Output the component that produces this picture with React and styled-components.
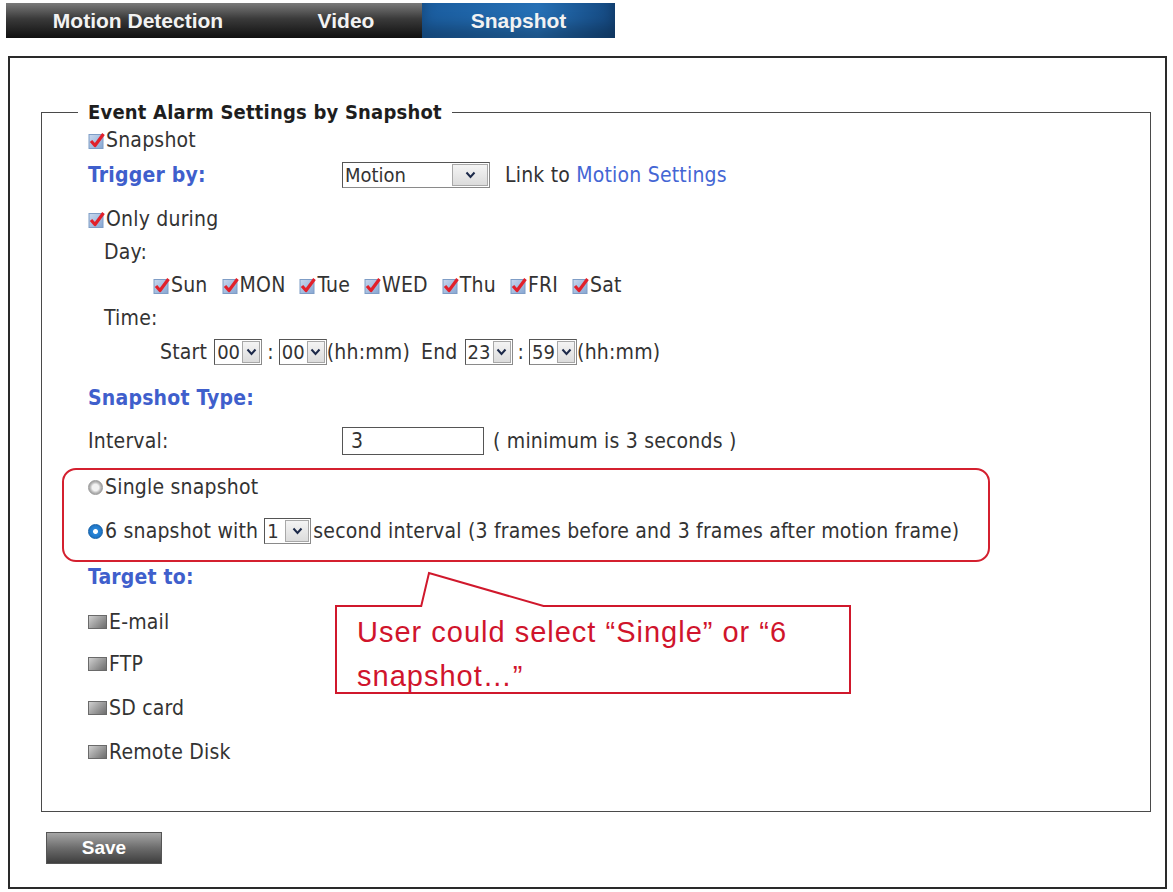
import React from "react";
import styled, { createGlobalStyle } from "styled-components";

const days = ["Sun", "MON", "Tue", "WED", "Thu", "FRI", "Sat"];
const targets = [
    { label: "E-mail", mt: 15 },
    { label: "FTP", mt: 12 },
    { label: "SD card", mt: 14 },
    { label: "Remote Disk", mt: 14 },
];

function CheckIcon() {
    return (
        <svg width="17" height="17" viewBox="0 0 17 17">
            <defs>
                <linearGradient id="cb" x1="0" y1="0" x2="1" y2="1">
                    <stop offset="0" stopColor="#c9d8ee" />
                    <stop offset="1" stopColor="#86a6d2" />
                </linearGradient>
            </defs>
            <rect x="1" y="2.5" width="14" height="14" fill="url(#cb)" stroke="#7f9dc6" />
            <polyline points="3,9 7,13.5 15.5,2" fill="none" stroke="#e2202a" strokeWidth="3.2" strokeLinejoin="round" />
        </svg>
    );
}

function Chevron() {
    return (
        <svg width="11" height="8" viewBox="0 0 11 8">
            <polyline points="1.5,1.5 5.5,6 9.5,1.5" fill="none" stroke="#1d2a4a" strokeWidth="2" />
        </svg>
    );
}

function Select({ value, w, btn }) {
    return (
        <SelectBox $w={w}>
            <SelectText>{value}</SelectText>
            <SelectBtn $w={btn}><Chevron /></SelectBtn>
        </SelectBox>
    );
}

function Check({ label, ...rest }) {
    return (
        <CheckItem {...rest}>
            <CheckIcon />
            <span>{label}</span>
        </CheckItem>
    );
}

export default function App() {
    return (
        <Page>
            <GlobalStyle />
            <TabBar>
                <Tab $w={264}>Motion Detection</Tab>
                <Tab $w={152}>Video</Tab>
                <Tab $w={193} $active>Snapshot</Tab>
            </TabBar>

            <Panel>
                <Fieldset>
                    <Legend>Event Alarm Settings by Snapshot</Legend>

                    <Row $mt={2}><Check label="Snapshot" /></Row>
                    <Row $mt={5}>
                        <BlueLabel>Trigger by:</BlueLabel>
                        <Select value="Motion" w={148} btn={34} />
                        <Text $ml={15}>Link to <Link>Motion Settings</Link></Text>
                    </Row>
                    <Row $mt={14}><Check label="Only during" /></Row>
                    <Row $mt={3} $indent={16}><Text>Day:</Text></Row>
                    <Row $mt={3} $indent={65} $gap={14}>
                        {days.map((d) => <Check key={d} label={d} />)}
                    </Row>
                    <Row $mt={3} $indent={16}><Text>Time:</Text></Row>
                    <Row $mt={4} $indent={72}>
                        <Text>Start</Text>
                        <Gap $w={7} />
                        <Select value="00" w={48} btn={16} />
                        <Text $ml={5} $mr={5}>:</Text>
                        <Select value="00" w={48} btn={16} />
                        <Text>(hh:mm)</Text>
                        <Gap $w={11} />
                        <Text>End</Text>
                        <Gap $w={7} />
                        <Select value="23" w={48} btn={16} />
                        <Text $ml={5} $mr={5}>:</Text>
                        <Select value="59" w={48} btn={16} />
                        <Text>(hh:mm)</Text>
                    </Row>
                    <Row $mt={16}><BlueLabel>Snapshot Type:</BlueLabel></Row>
                    <Row $mt={13}>
                        <Label>Interval:</Label>
                        <Input>3</Input>
                        <Text $ml={9}>( minimum is 3 seconds )</Text>
                    </Row>

                    <Highlight>
                        <Row $mt={2}>
                            <Radio />
                            <Text $ml={2}>Single snapshot</Text>
                        </Row>
                        <Row $mt={14}>
                            <Radio $on />
                            <Text $ml={2} $mr={6}>6 snapshot with</Text>
                            <Select value="1" w={47} btn={22} />
                            <Text $ml={2}>second interval (3 frames before and 3 frames after motion frame)</Text>
                        </Row>
                    </Highlight>

                    <Row><BlueLabel>Target to:</BlueLabel></Row>
                    {targets.map((t) => (
                        <Row key={t.label} $mt={t.mt}>
                            <GrayBox />
                            <Text $ml={2}>{t.label}</Text>
                        </Row>
                    ))}
                </Fieldset>

                <SaveButton>Save</SaveButton>

                <Callout>
                    <Tail width="130" height="36" viewBox="0 0 130 36">
                        <polygon points="2,36 10,2 128,36" fill="#fff" />
                        <polyline points="2,36 10,2 128,36" fill="none" stroke="#d0182c" strokeWidth="2" />
                    </Tail>
                    User could select “Single” or “6<br />snapshot…”
                </Callout>
            </Panel>
        </Page>
    );
}

// Styled components
const GlobalStyle = createGlobalStyle`
    html, body {
        margin: 0;
        padding: 0;
        background: #fff;
    }
    body {
        font-family: "DejaVu Sans Condensed", "DejaVu Sans", sans-serif;
        font-size: 21px;
        letter-spacing: 0.2px;
        color: #333;
    }
`;

const Page = styled.div`
    padding: 3px 0 4px 6px;
`;

const TabBar = styled.div`
    display: flex;
    width: 609px;
    height: 35px;
    background: linear-gradient(#7a7a7a, #3a3a3a 45%, #101010);
`;

const Tab = styled.div`
    width: ${(p) => p.$w}px;
    display: flex;
    align-items: center;
    justify-content: center;
    font-family: "Liberation Sans", Arial, sans-serif;
    font-weight: bold;
    font-size: 21px;
    letter-spacing: 0;
    color: #f2f2f2;
    background: ${(p) => p.$active ? "linear-gradient(90deg, #1a5c9e, #2670b5 60%, #14477e)" : "transparent"};
    ${(p) => p.$active && "box-shadow: inset 0 -12px 14px rgba(0,0,0,0.25);"}
`;

const Panel = styled.div`
    position: relative;
    width: 1159px;
    box-sizing: border-box;
    margin: 18px 0 0 2px;
    border: 2px solid #2a2a2a;
    padding: 43px 14px 23px 31px;
`;

const Fieldset = styled.fieldset`
    margin: 0;
    padding: 0 0 44px 46px;
    border: 1px solid #4a4a4a;
    min-width: 0;
`;

const Legend = styled.legend`
    margin-left: -10px;
    padding: 0 10px;
    font-weight: bold;
    font-size: 20px;
    line-height: 22px;
    color: #1e1e1e;
`;

const Row = styled.div`
    display: flex;
    align-items: center;
    height: 30px;
    margin-top: ${(p) => p.$mt || 0}px;
    padding-left: ${(p) => p.$indent || 0}px;
    gap: ${(p) => p.$gap || 0}px;
    white-space: nowrap;
`;

const Text = styled.span`
    margin-left: ${(p) => p.$ml || 0}px;
    margin-right: ${(p) => p.$mr || 0}px;
`;

const Gap = styled.span`
    width: ${(p) => p.$w}px;
`;

const Label = styled.span`
    width: 254px;
`;

const BlueLabel = styled(Label)`
    font-weight: bold;
    color: #3f5fcc;
`;

const Link = styled.span`
    color: #4466d4;
`;

const CheckItem = styled.span`
    display: inline-flex;
    align-items: center;
    gap: 1px;
`;

const SelectBox = styled.div`
    display: flex;
    width: ${(p) => p.$w}px;
    height: 26px;
    box-sizing: border-box;
    border: 1px solid #8a8a8a;
    border-top-color: #555;
    border-left-color: #555;
    background: #fff;
`;

const SelectText = styled.span`
    flex: 1;
    padding-left: 2px;
    font-size: 20px;
    letter-spacing: 0;
    line-height: 24px;
    overflow: hidden;
`;

const SelectBtn = styled.span`
    width: ${(p) => p.$w}px;
    margin: 1px;
    display: flex;
    align-items: center;
    justify-content: center;
    border: 1px solid #a8a8a8;
    background: linear-gradient(#f4f4f4, #dcdcdc);
`;

const Input = styled.div`
    width: 142px;
    height: 28px;
    box-sizing: border-box;
    border: 1px solid #555;
    padding-left: 8px;
    line-height: 26px;
`;

const Highlight = styled.div`
    margin: 12px 0 0 -26px;
    width: 928px;
    height: 94px;
    box-sizing: border-box;
    border: 2px solid #d4202f;
    border-radius: 14px;
    padding-left: 24px;
`;

const Radio = styled.span`
    width: 13px;
    height: 13px;
    border-radius: 50%;
    border: 1px solid ${(p) => p.$on ? "#1460a8" : "#9a9a9a"};
    background: ${(p) => p.$on
        ? "radial-gradient(circle, #fff 0 22%, #2a86d8 32%, #1566b4 100%)"
        : "radial-gradient(circle, #f2f2f2 0 35%, #b4b4b4 60%, #8c8c8c 100%)"};
`;

const GrayBox = styled.span`
    width: 17px;
    height: 12px;
    border: 1px solid #6a6a6a;
    background: linear-gradient(135deg, #d0d0d0, #8a8a8a 70%, #6e6e6e);
`;

const SaveButton = styled.div`
    margin: 20px 0 0 5px;
    width: 116px;
    height: 32px;
    display: flex;
    align-items: center;
    justify-content: center;
    font-family: "Liberation Sans", Arial, sans-serif;
    font-weight: bold;
    font-size: 19px;
    letter-spacing: 0;
    color: #fff;
    border: 1px solid #555;
    box-sizing: border-box;
    background: linear-gradient(#a6a6a6, #6c6c6c 50%, #3e3e3e);
`;

const Callout = styled.div`
    position: absolute;
    left: 325px;
    top: 547px;
    width: 516px;
    height: 89px;
    box-sizing: border-box;
    border: 2px solid #d0182c;
    background: #fff;
    padding: 3px 0 0 20px;
    font-family: "Liberation Sans", Arial, sans-serif;
    font-size: 29px;
    letter-spacing: 1px;
    line-height: 44px;
    color: #d0142c;
`;

const Tail = styled.svg`
    position: absolute;
    left: 82px;
    top: -36px;
`;
